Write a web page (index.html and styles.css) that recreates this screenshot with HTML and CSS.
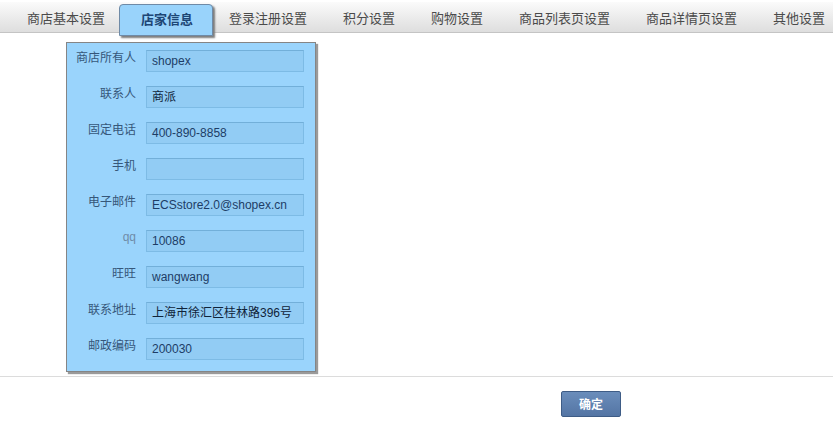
FILE: index.html
```html
<!DOCTYPE html>
<html lang="zh-CN">
<head>
<meta charset="utf-8">
<title>店家信息</title>
<link rel="stylesheet" href="styles.css">
</head>
<body>
<div class="tabs">
  <ul class="tab-list">
    <li class="tab">商店基本设置</li>
    <li class="tab active">店家信息</li>
    <li class="tab">登录注册设置</li>
    <li class="tab">积分设置</li>
    <li class="tab">购物设置</li>
    <li class="tab">商品列表页设置</li>
    <li class="tab">商品详情页设置</li>
    <li class="tab">其他设置</li>
  </ul>
</div>
<div class="content">
  <div class="panel">
    <label class="lbl">商店所有人</label><div class="field">shopex</div>
    <label class="lbl">联系人</label><div class="field cjk">商派</div>
    <label class="lbl">固定电话</label><div class="field">400-890-8858</div>
    <label class="lbl">手机</label><div class="field"></div>
    <label class="lbl">电子邮件</label><div class="field">ECSstore2.0@shopex.cn</div>
    <label class="lbl latin">qq</label><div class="field">10086</div>
    <label class="lbl">旺旺</label><div class="field">wangwang</div>
    <label class="lbl">联系地址</label><div class="field cjk">上海市徐汇区桂林路396号</div>
    <label class="lbl">邮政编码</label><div class="field">200030</div>
  </div>
</div>
<div class="footer">
  <button class="btn" type="button">确定</button>
</div>
</body>
</html>
```
FILE: styles.css
```css
html, body {
  margin: 0;
  padding: 0;
  background: #fff;
  overflow: hidden;
}
body {
  font-family: "Liberation Sans", "Noto Sans CJK SC", sans-serif;
  font-size: 12px;
  color: #333;
}
.tabs {
  margin-top: 2px;
  height: 30px;
  border-bottom: 1px solid #c4c4c4;
  background: linear-gradient(#fbfbfb, #e9e9e9 60%, #dedede);
  overflow: visible;
}
.tab-list {
  list-style: none;
  margin: 0;
  padding: 0 0 0 9px;
  display: flex;
  flex-wrap: nowrap;
  height: 30px;
  align-items: flex-start;
}
.tab {
  flex-shrink: 0;
  padding: 0 18px;
  height: 30px;
  line-height: 31px;
  font-family: "Noto Sans CJK SC", sans-serif;
  font-size: 13px;
  color: #4a4a4a;
  white-space: nowrap;
}
.tab.active {
  margin: 2px -2px 0 -4px;
  padding: 0 19px 0 21px;
  height: 30px;
  line-height: 28px;
  background: #99d3fb;
  border: 1px solid #6f8aa6;
  border-radius: 4px 4px 0 0;
  box-shadow: 2px 2px 2px #7c7c7c;
  font-weight: bold;
  color: #1d4675;
  position: relative;
  z-index: 2;
}
.content {
  padding: 9px 0 4px 66px;
}
.panel {
  width: 237px;
  padding: 7px 11px 11px 0;
  background: #9ad4fc;
  border: 1px solid #858585;
  box-shadow: 2px 2px 1px #9a9a9a;
  display: grid;
  grid-template-columns: 69px 158px;
  column-gap: 10px;
  row-gap: 14px;
}
.lbl {
  align-self: start;
  text-align: right;
  line-height: 14px;
  font-family: "Noto Sans CJK SC", sans-serif;
  font-size: 12px;
  color: #36577a;
}
.lbl.latin {
  font-family: "Liberation Sans", sans-serif;
  color: #6f8ba8;
}
.field {
  box-sizing: border-box;
  height: 22px;
  padding: 0 5px;
  line-height: 21px;
  background: #92ccf4;
  border: 1px solid #7dbbe5;
  border-top-color: #72afd9;
  color: #1d3d66;
  white-space: nowrap;
  overflow: hidden;
}
.field.cjk {
  font-family: "Liberation Sans", "Noto Sans CJK SC", sans-serif;
  color: #10243a;
  font-size: 12px;
}
.footer {
  border-top: 1px solid #dcdcdc;
  padding: 14px 0 0 561px;
}
.btn {
  display: block;
  width: 60px;
  height: 26px;
  padding: 0;
  margin: 0;
  border: 1px solid #3e5c86;
  border-radius: 2px;
  background: linear-gradient(#6a8dbb, #5475a4);
  color: #fff;
  font-family: "Noto Sans CJK SC", sans-serif;
  font-size: 12px;
  font-weight: bold;
  line-height: 24px;
  cursor: pointer;
}
```
